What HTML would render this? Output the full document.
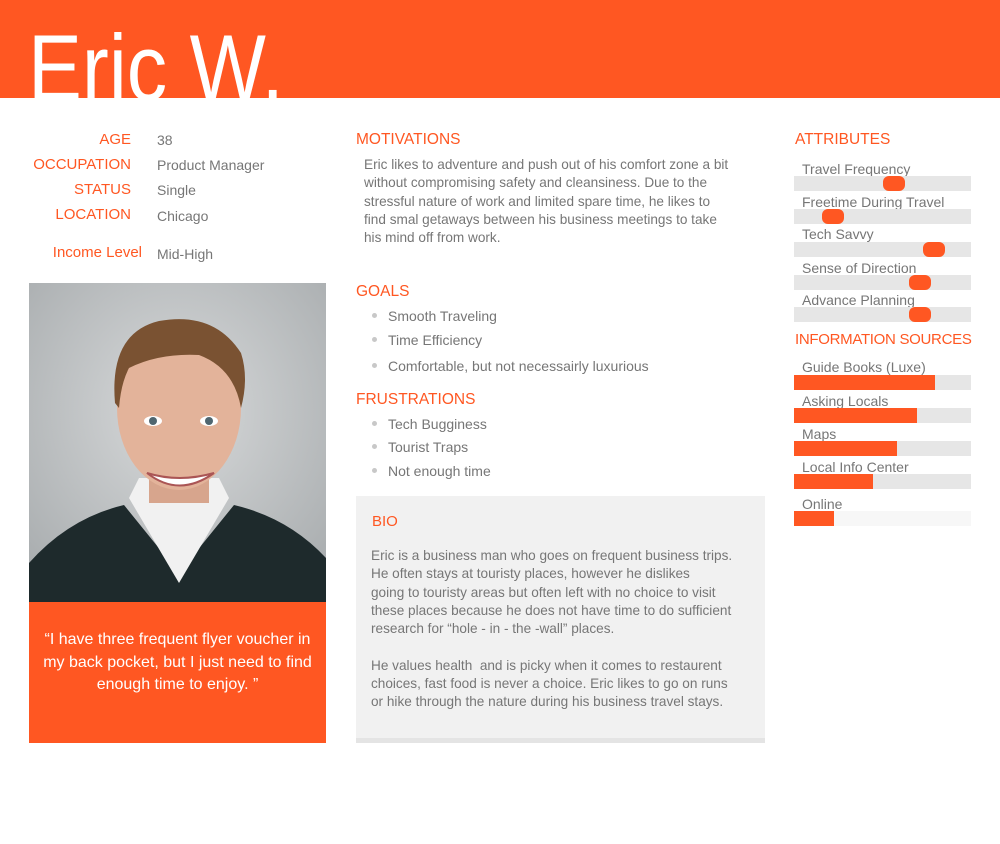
<!DOCTYPE html>
<html><head><style>
*{margin:0;padding:0;box-sizing:border-box}
body{width:1000px;height:844px;background:#fff;position:relative;overflow:hidden;font-family:"Liberation Sans",sans-serif;color:#767676}
.a{position:absolute;white-space:nowrap}
.o{color:#ff5722}
.hdr{position:absolute;left:0;top:0;width:1000px;height:98px;background:#ff5722;overflow:hidden}
.title{position:absolute;left:28px;top:21px;font-size:94px;color:#fff;letter-spacing:0;transform:scaleX(.86);transform-origin:left top;line-height:1}
.lab{font-size:15px;text-align:right;width:131px;left:0}
.val{font-size:14px;left:157px}
.h{font-size:15.5px;color:#ff5722}
.t{font-size:13.6px;line-height:18.3px}
.li{font-size:14px;left:388px}
.dot{position:absolute;left:372px;width:5px;height:5px;border-radius:50%;background:#c8c8c8}
.bar{position:absolute;left:794px;width:177px;height:15px;background:#e6e6e6}
.k{position:absolute;top:0;width:22px;height:15px;border-radius:6px;background:#ff5722}
.f{position:absolute;left:0;top:0;height:15px;background:#ff5722}
.al{font-size:14px;left:802px}
</style></head><body>
<div class="hdr"><div class="title">Eric W.</div></div>

<div class="a o lab" style="top:131px">AGE</div><div class="a val" style="top:132px">38</div>
<div class="a o lab" style="top:156px">OCCUPATION</div><div class="a val" style="top:157px">Product Manager</div>
<div class="a o lab" style="top:181px">STATUS</div><div class="a val" style="top:182px">Single</div>
<div class="a o lab" style="top:206px">LOCATION</div><div class="a val" style="top:208px">Chicago</div>
<div class="a o lab" style="top:244px;width:142px">Income Level</div><div class="a val" style="top:246px">Mid-High</div>

<svg class="a" style="left:29px;top:283px" width="297" height="319" viewBox="0 0 297 319">
<defs><radialGradient id="bg" cx="50%" cy="40%" r="70%"><stop offset="0" stop-color="#d8dadb"/><stop offset="1" stop-color="#a9adaf"/></radialGradient></defs>
<rect width="297" height="319" fill="url(#bg)"/>
<path d="M0 280 Q40 235 95 222 L150 290 L205 222 Q260 235 297 275 L297 319 L0 319Z" fill="#1e2a2c"/>
<path d="M100 215 L150 300 L200 215 L190 195 L110 195Z" fill="#f1f1f1"/>
<rect x="120" y="175" width="60" height="45" fill="#d7a58d"/>
<ellipse cx="150" cy="125" rx="62" ry="82" fill="#e3b39a"/>
<path d="M86 120 Q80 50 130 38 Q185 28 212 70 Q220 95 212 125 Q205 85 170 72 Q130 70 100 85 Q92 100 90 125Z" fill="#7a5232"/>
<ellipse cx="124" cy="138" rx="9" ry="5" fill="#fff"/><ellipse cx="180" cy="138" rx="9" ry="5" fill="#fff"/>
<circle cx="124" cy="138" r="4" fill="#4f6670"/><circle cx="180" cy="138" r="4" fill="#4f6670"/>
<path d="M118 190 Q150 215 185 190 Q150 200 118 190Z" fill="#fff" stroke="#a55" stroke-width="2"/>
</svg>
<div class="a" style="left:29px;top:602px;width:297px;height:141px;background:#ff5722;color:#fff;font-size:16px;line-height:22.5px;text-align:center;white-space:normal;padding:27px 8px 0">“I have three frequent flyer voucher in my back pocket, but I just need to find enough time to enjoy. ”</div>

<div class="a h" style="left:356px;top:131px">MOTIVATIONS</div>
<div class="a t" style="left:364px;top:156px">Eric likes to adventure and push out of his comfort zone a bit<br>without compromising safety and cleansiness. Due to the<br>stressful nature of work and limited spare time, he likes to<br>find smal getaways between his business meetings to take<br>his mind off from work.</div>

<div class="a h" style="left:356px;top:283px">GOALS</div>
<div class="dot" style="top:313px"></div><div class="a li" style="top:308px">Smooth Traveling</div>
<div class="dot" style="top:337px"></div><div class="a li" style="top:332px">Time Efficiency</div>
<div class="dot" style="top:363px"></div><div class="a li" style="top:358px">Comfortable, but not necessairly luxurious</div>

<div class="a h" style="left:356px;top:391px">FRUSTRATIONS</div>
<div class="dot" style="top:421px"></div><div class="a li" style="top:416px">Tech Bugginess</div>
<div class="dot" style="top:444px"></div><div class="a li" style="top:439px">Tourist Traps</div>
<div class="dot" style="top:468px"></div><div class="a li" style="top:463px">Not enough time</div>

<div class="a" style="left:356px;top:496px;width:409px;height:247px;background:#f1f1f1;border-bottom:5px solid #e4e4e4"></div>
<div class="a o" style="left:372px;top:513px;font-size:15px">BIO</div>
<div class="a t" style="left:371px;top:547px">Eric is a business man who goes on frequent business trips.<br>He often stays at touristy places, however he dislikes<br>going to touristy areas but often left with no choice to visit<br>these places because he does not have time to do sufficient<br>research for “hole - in - the -wall” places.<br><br>He values health &nbsp;and is picky when it comes to restaurent<br>choices, fast food is never a choice. Eric likes to go on runs<br>or hike through the nature during his business travel stays.</div>

<div class="a h" style="left:795px;top:131px">ATTRIBUTES</div>
<div class="a al" style="top:161px">Travel Frequency</div><div class="bar" style="top:176px"><div class="k" style="left:89px"></div></div>
<div class="a al" style="top:194px">Freetime During Travel</div><div class="bar" style="top:209px"><div class="k" style="left:28px"></div></div>
<div class="a al" style="top:226px">Tech Savvy</div><div class="bar" style="top:242px"><div class="k" style="left:129px"></div></div>
<div class="a al" style="top:260px">Sense of Direction</div><div class="bar" style="top:275px"><div class="k" style="left:115px"></div></div>
<div class="a al" style="top:292px">Advance Planning</div><div class="bar" style="top:307px"><div class="k" style="left:115px"></div></div>

<div class="a h" style="left:795px;top:331px;font-size:15px;letter-spacing:-.3px">INFORMATION SOURCES</div>
<div class="a al" style="top:359px">Guide Books (Luxe)</div><div class="bar" style="top:375px"><div class="f" style="width:141px"></div></div>
<div class="a al" style="top:393px">Asking Locals</div><div class="bar" style="top:408px"><div class="f" style="width:123px"></div></div>
<div class="a al" style="top:426px">Maps</div><div class="bar" style="top:441px"><div class="f" style="width:103px"></div></div>
<div class="a al" style="top:459px">Local Info Center</div><div class="bar" style="top:474px"><div class="f" style="width:79px"></div></div>
<div class="a al" style="top:496px">Online</div><div class="bar" style="top:511px;background:#f7f7f7"><div class="f" style="width:40px"></div></div>
</body></html>
